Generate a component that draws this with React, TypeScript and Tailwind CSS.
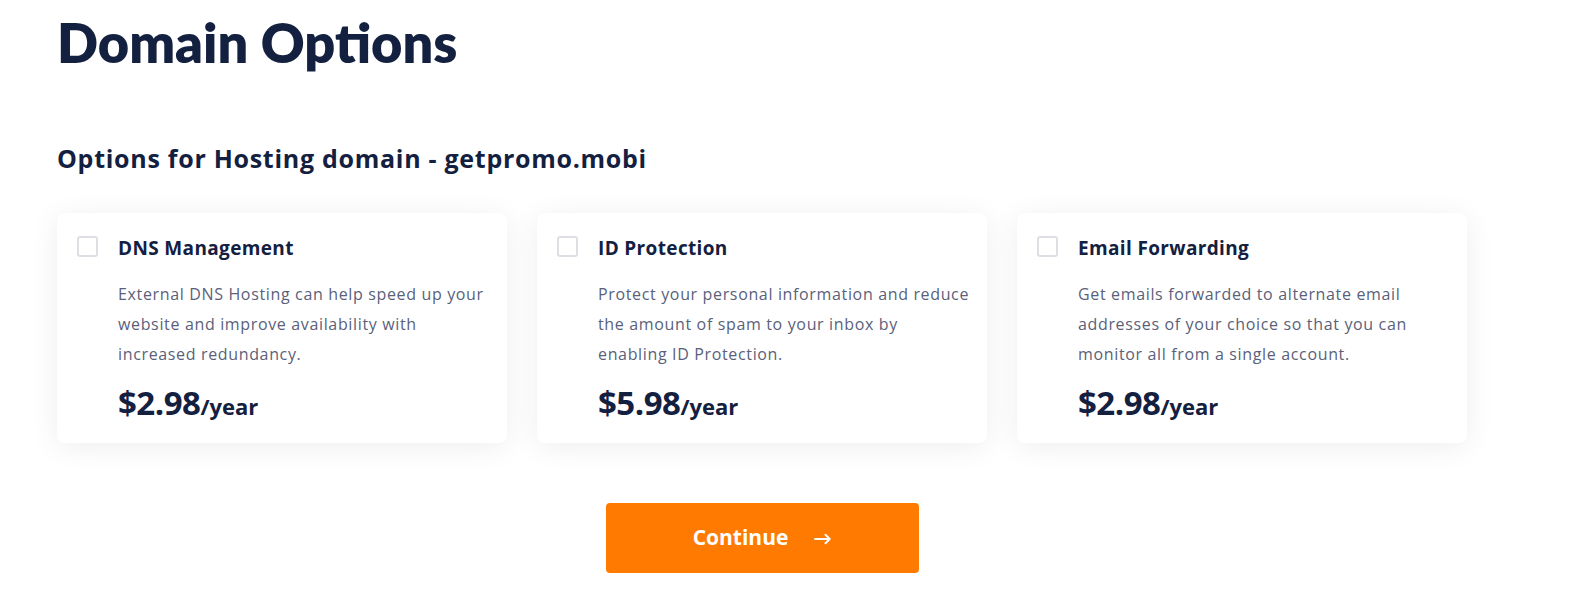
const options = [
    {
        title: 'DNS Management',
        text: 'External DNS Hosting can help speed up your website and improve availability with increased redundancy.',
        price: '$2.98',
    },
    {
        title: 'ID Protection',
        text: 'Protect your personal information and reduce the amount of spam to your inbox by enabling ID Protection.',
        price: '$5.98',
    },
    {
        title: 'Email Forwarding',
        text: 'Get emails forwarded to alternate email addresses of your choice so that you can monitor all from a single account.',
        price: '$2.98',
    },
];

function OptionCard({ title, text, price }: { title: string; text: string; price: string }) {
    return (
        <label className="flex gap-5 rounded-lg bg-white pt-[22px] pl-5 pr-4 pb-[14px] shadow-[0_4px_30px_rgba(0,0,0,0.07)] cursor-pointer">
            <span className="mt-px h-[21px] w-[21px] shrink-0 rounded-[3px] border-2 border-[#dedfe5] bg-white" />
            <div className="flex flex-col">
                <h3 className="text-[19px] font-bold leading-[26px] tracking-[0.35px] text-[#13203f]">{title}</h3>
                <p className="mt-[18px] text-[16px] leading-[30px] tracking-[0.65px] text-[#5a5f7a]">{text}</p>
                <p className="mt-[14px] font-bold text-[#13203f] leading-[40px]">
                    <span className="text-[33px] tracking-[-0.5px]">{price}</span>
                    <span className="text-[22px]">/year</span>
                </p>
            </div>
        </label>
    );
}

export default function App() {
    return (
        <div className="min-h-screen bg-white pl-[57px] pt-[7px] font-['Open_Sans',sans-serif]">
            <div className="w-[1410px]">
                <h1 className="font-['Lato',sans-serif] text-[54px] font-extrabold leading-[72px] text-[#13203f]">
                    Domain Options
                </h1>
                <h2 className="mt-[63px] text-[25px] font-bold leading-[32px] tracking-[0.72px] text-[#13203f]">
                    Options for Hosting domain - getpromo.mobi
                </h2>
                <div className="mt-[39px] grid grid-cols-3 gap-[30px]">
                    {options.map((o) => (
                        <OptionCard key={o.title} {...o} />
                    ))}
                </div>
                <div className="mt-[60px] flex justify-center">
                    <button className="flex h-[70px] w-[313px] items-center justify-center gap-[26px] rounded bg-[#ff7a00] text-[21px] font-bold text-white">
                        Continue
                        <svg width="17" height="12" viewBox="0 0 17 12" fill="none" stroke="currentColor" strokeWidth="2" strokeLinecap="round" strokeLinejoin="round" className="mt-px">
                            <path d="M1 6h14.5M11.5 1.8L15.7 6l-4.2 4.2" />
                        </svg>
                    </button>
                </div>
            </div>
        </div>
    );
}
